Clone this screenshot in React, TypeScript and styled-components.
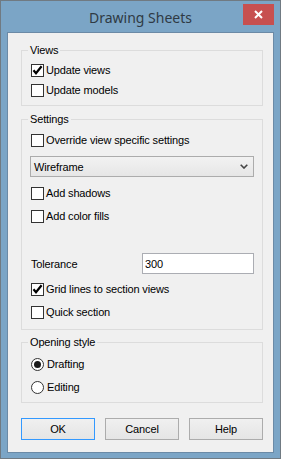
import React from 'react';
import styled, { createGlobalStyle } from 'styled-components';

const GlobalStyle = createGlobalStyle`
  html, body {
    margin: 0;
    padding: 0;
    background: #7ba5c6;
  }
  * {
    box-sizing: border-box;
  }
`;

const Window = styled.div`
  width: 281px;
  height: 459px;
  background: #7ba5c6;
  border: 1px solid #707a82;
  display: flex;
  flex-direction: column;
  font-family: 'Liberation Sans', Arial, sans-serif;
  font-size: 11px;
  letter-spacing: -0.15px;
  color: #000;
`;

const TitleBar = styled.div`
  height: 31px;
  display: grid;
  grid-template-columns: 1fr auto 1fr;
  align-items: start;
`;

const Title = styled.div`
  grid-column: 2;
  font-family: 'Noto Sans', 'Open Sans', sans-serif;
  font-size: 14px;
  letter-spacing: 0;
  line-height: 20px;
  margin-top: 7px;
  color: #2f3a44;
`;

const CloseButton = styled.div`
  grid-column: 3;
  justify-self: end;
  margin-top: 3px;
  margin-right: 6px;
  width: 31px;
  height: 21px;
  background: #c75050;
  display: flex;
  align-items: center;
  justify-content: center;
`;

const Client = styled.div`
  margin: 0 6px;
  height: 421px;
  background: #f0f0f0;
  border: 1px solid #6b8aa6;
  padding: 17px 10px 12px 13px;
  display: flex;
  flex-direction: column;
`;

const Group = styled.div<{ $pt: number; $pb: number; $mt?: number }>`
  position: relative;
  border: 1px solid #dcdcdc;
  padding: ${p => p.$pt}px 8px ${p => p.$pb}px 8px;
  margin-top: ${p => p.$mt ?? 0}px;
  display: flex;
  flex-direction: column;
`;

const Legend = styled.div`
  position: absolute;
  top: -7px;
  left: 6px;
  padding: 0 2px;
  line-height: 13px;
  background: #f0f0f0;
`;

const Row = styled.label<{ $mt?: number }>`
  display: flex;
  align-items: center;
  height: 20px;
  margin-top: ${p => p.$mt ?? 0}px;
  padding-left: 1px;
`;

const Box = styled.span`
  width: 13px;
  height: 13px;
  border: 1px solid #333;
  background: #fff;
  margin-right: 2px;
  display: flex;
  align-items: center;
  justify-content: center;
  flex-shrink: 0;
`;

const Radio = styled.span`
  width: 13px;
  height: 13px;
  border: 1px solid #333;
  border-radius: 50%;
  background: #fff;
  margin-right: 3px;
  display: flex;
  align-items: center;
  justify-content: center;
  flex-shrink: 0;
`;

const Dot = styled.span`
  width: 7px;
  height: 7px;
  border-radius: 50%;
  background: #1a1a1a;
`;

const Select = styled.div<{ $mt?: number }>`
  height: 21px;
  margin-top: ${p => p.$mt ?? 0}px;
  border: 1px solid #acacac;
  background: linear-gradient(#f2f2f2, #e6e6e6);
  display: flex;
  align-items: center;
  justify-content: space-between;
  padding: 0 5px 0 3px;
`;

const FieldRow = styled.div<{ $mt?: number }>`
  display: grid;
  grid-template-columns: 111px 1fr;
  align-items: center;
  height: 21px;
  margin-top: ${p => p.$mt ?? 0}px;
  padding-left: 1px;
`;

const Input = styled.div`
  height: 21px;
  border: 1px solid #abadb3;
  background: #fff;
  padding-left: 2px;
  display: flex;
  align-items: center;
`;

const ButtonBar = styled.div`
  margin-top: 15px;
  display: flex;
  justify-content: space-between;
`;

const Button = styled.div<{ $default?: boolean }>`
  width: 74px;
  height: 22px;
  border: 1px solid ${p => (p.$default ? '#3399ff' : '#acacac')};
  background: linear-gradient(#f0f0f0, #e5e5e5);
  display: flex;
  align-items: center;
  justify-content: center;
`;

const Check = ({ checked, label, mt }: { checked?: boolean; label: string; mt?: number }) => (
  <Row $mt={mt}>
    <Box>
      {checked && (
        <svg width="11" height="11" viewBox="0 0 11 11">
          <path d="M1.5 5.2 L4 8.2 L9.6 1.2" fill="none" stroke="#000" strokeWidth="2.2" />
        </svg>
      )}
    </Box>
    {label}
  </Row>
);

const Option = ({ selected, label, mt }: { selected?: boolean; label: string; mt?: number }) => (
  <Row $mt={mt}>
    <Radio>{selected && <Dot />}</Radio>
    {label}
  </Row>
);

export default function App() {
  return (
    <>
      <GlobalStyle />
      <Window>
        <TitleBar>
          <Title>Drawing Sheets</Title>
          <CloseButton>
            <svg width="9" height="9" viewBox="0 0 9 9">
              <path d="M1 1 L8 8 M8 1 L1 8" stroke="#fff" strokeWidth="2" />
            </svg>
          </CloseButton>
        </TitleBar>
        <Client>
          <Group $pt={9} $pb={5}>
            <Legend>Views</Legend>
            <Check checked label="Update views" />
            <Check label="Update models" />
          </Group>

          <Group $pt={10} $pb={7} $mt={13}>
            <Legend>Settings</Legend>
            <Check label="Override view specific settings" />
            <Select $mt={6}>
              <span>Wireframe</span>
              <svg width="8" height="5" viewBox="0 0 8 5">
                <path d="M0.7 0.7 L4 4 L7.3 0.7" fill="none" stroke="#444" strokeWidth="1.6" />
              </svg>
            </Select>
            <Check label="Add shadows" mt={6} />
            <Check label="Add color fills" mt={3} />
            <FieldRow $mt={27}>
              <span>Tolerance</span>
              <Input>300</Input>
            </FieldRow>
            <Check checked label="Grid lines to section views" mt={5} />
            <Check label="Quick section" mt={3} />
          </Group>

          <Group $pt={11} $pb={5} $mt={12}>
            <Legend>Opening style</Legend>
            <Option selected label="Drafting" />
            <Option label="Editing" mt={3} />
          </Group>

          <ButtonBar>
            <Button $default>OK</Button>
            <Button>Cancel</Button>
            <Button>Help</Button>
          </ButtonBar>
        </Client>
      </Window>
    </>
  );
}
